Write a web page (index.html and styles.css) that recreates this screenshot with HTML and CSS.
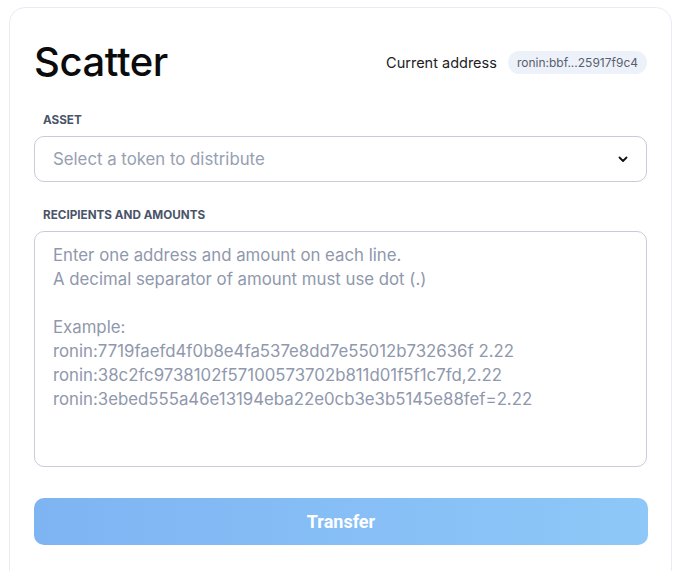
FILE: index.html
```html
<!DOCTYPE html>
<html>
<head>
<meta charset="utf-8">
<link rel="stylesheet" href="styles.css">
</head>
<body>
<div class="card">
  <div class="header">
    <h1 class="title">Scatter</h1>
    <div class="address">
      <span class="address-label">Current address</span>
      <span class="pill">ronin:bbf...25917f9c4</span>
    </div>
  </div>
  <div class="field">
    <div class="label">ASSET</div>
    <div class="select">
      <span class="placeholder">Select a token to distribute</span>
      <svg class="chevron" width="12" height="12" viewBox="0 0 12 12"><path d="M2.5 4.5 L6 8 L9.5 4.5" fill="none" stroke="#111" stroke-width="1.8" stroke-linecap="round" stroke-linejoin="round"/></svg>
    </div>
  </div>
  <div class="field">
    <div class="label">RECIPIENTS AND AMOUNTS</div>
    <div class="textarea">
      <div>Enter one address and amount on each line.</div>
      <div>A decimal separator of amount must use dot (.)</div>
      <div>&nbsp;</div>
      <div>Example:</div>
      <div>ronin:7719faefd4f0b8e4fa537e8dd7e55012b732636f 2.22</div>
      <div>ronin:38c2fc9738102f57100573702b811d01f5f1c7fd,2.22</div>
      <div>ronin:3ebed555a46e13194eba22e0cb3e3b5145e88fef=2.22</div>
    </div>
  </div>
  <button class="transfer">Transfer</button>
</div>
</body>
</html>
```

FILE: styles.css
```css
html, body {
  margin: 0;
  padding: 0;
  background: #ffffff;
  font-family: Inter, "Noto Sans", sans-serif;
}
.card {
  margin: 7px 8px 0 9px;
  width: 613px;
  height: 600px;
  border: 1px solid #e8edf5;
  border-radius: 16px;
  padding: 0 24px;
  box-sizing: content-box;
}
.header {
  display: flex;
  justify-content: space-between;
  align-items: center;
  padding-top: 31px;
  height: 46px;
}
.title {
  margin: 0;
  font-size: 40px;
  font-weight: 550;
  color: #0b0b0b;
  line-height: 46px;
  letter-spacing: -0.4px;
}
.address {
  display: flex;
  align-items: center;
  gap: 11px;
  margin-top: 0;
}
.address-label {
  font-size: 14.5px;
  color: #222;
}
.pill {
  background: #edf1f9;
  color: #59606e;
  font-size: 12px;
  padding: 0 9px;
  height: 23px;
  line-height: 23px;
  border-radius: 12px;
}
.label {
  font-size: 11.7px;
  font-weight: 700;
  color: #4a5468;
  padding-left: 9px;
  height: 20px;
  line-height: 20px;
}
.header + .field .label {
  margin-top: 25px;
}
.select {
  margin-top: 6px;
  height: 44px;
  border: 1px solid #c6ccd9;
  border-radius: 10px;
  display: flex;
  align-items: center;
  justify-content: space-between;
  padding: 0 17px 0 18px;
}
.placeholder {
  font-size: 16.8px;
  color: #97a0b2;
}
.field + .field .label {
  margin-top: 23px;
}
.textarea {
  margin-top: 6px;
  height: 223px;
  border: 1px solid #c6ccd9;
  border-radius: 10px;
  padding: 11px 18px 0;
  font-size: 16.8px;
  line-height: 24px;
  color: #8f98ac;
}
.transfer {
  display: block;
  margin-top: 31px;
  width: 614px;
  height: 47px;
  border: none;
  border-radius: 10px;
  background: linear-gradient(90deg, #7fb4f3 0%, #8dc8f8 100%);
  color: #ffffff;
  font-family: Roboto, Inter, sans-serif;
  font-weight: 700;
  font-size: 18px;
}
```
